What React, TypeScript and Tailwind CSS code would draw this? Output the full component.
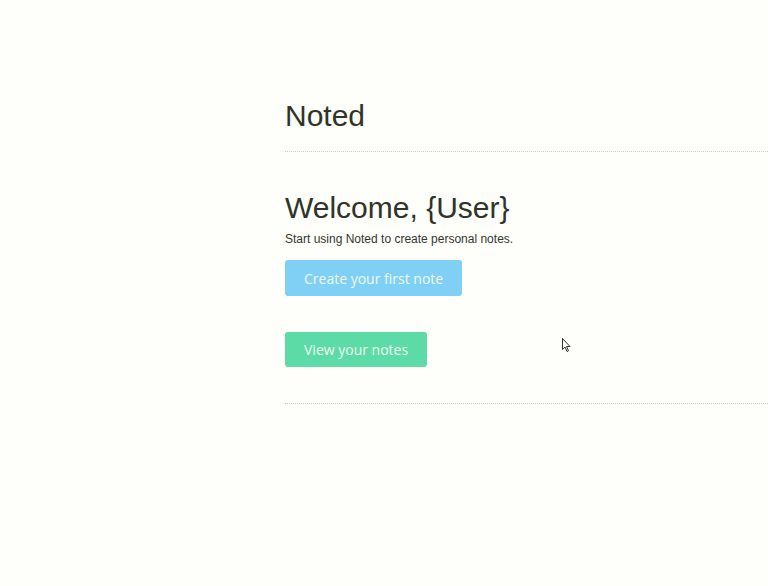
import React from 'react';

const App: React.FC = () => {
  return (
    <div className="relative min-h-[586px] w-full overflow-hidden bg-[#fefefa] text-[#2f3328] font-['Liberation_Sans',Arial,sans-serif]">
      <div className="ml-[285px] pt-[99px]">
        <h1 className="text-[30px] leading-[33px]">Noted</h1>
        <div className="mt-[19px] border-t border-dotted border-[#c9cad6]" />

        <h2 className="mt-[39px] text-[30px] leading-[33px]">Welcome, {'{User}'}</h2>
        <p className="mt-[6px] text-[12px] leading-[18px] text-[#33362e]">
          Start using Noted to create personal notes.
        </p>

        <div className="mt-[12px] flex flex-col items-start gap-[36px] font-['Open_Sans',sans-serif]">
          <button className="h-[36px] rounded-[3px] bg-[#7fd0f4] px-[19px] text-[14px] text-[#eef8ee]">
            Create your first note
          </button>
          <button className="h-[35px] rounded-[3px] bg-[#5ddba6] px-[19px] text-[14px] text-[#eefaee]">
            View your notes
          </button>
        </div>

        <div className="mt-[36px] border-t border-dotted border-[#c9cad6]" />
      </div>

      <svg
        className="absolute left-[562px] top-[338px]"
        width="10"
        height="15"
        viewBox="0 0 10 15"
      >
        <path d="M0.5 0.5 L0.5 11.5 L3 9 L5 13.5 L6.5 12.8 L4.6 8.5 L8 8.5 Z" fill="#fff" stroke="#333" strokeWidth="1" />
      </svg>
    </div>
  );
};

export default App;
